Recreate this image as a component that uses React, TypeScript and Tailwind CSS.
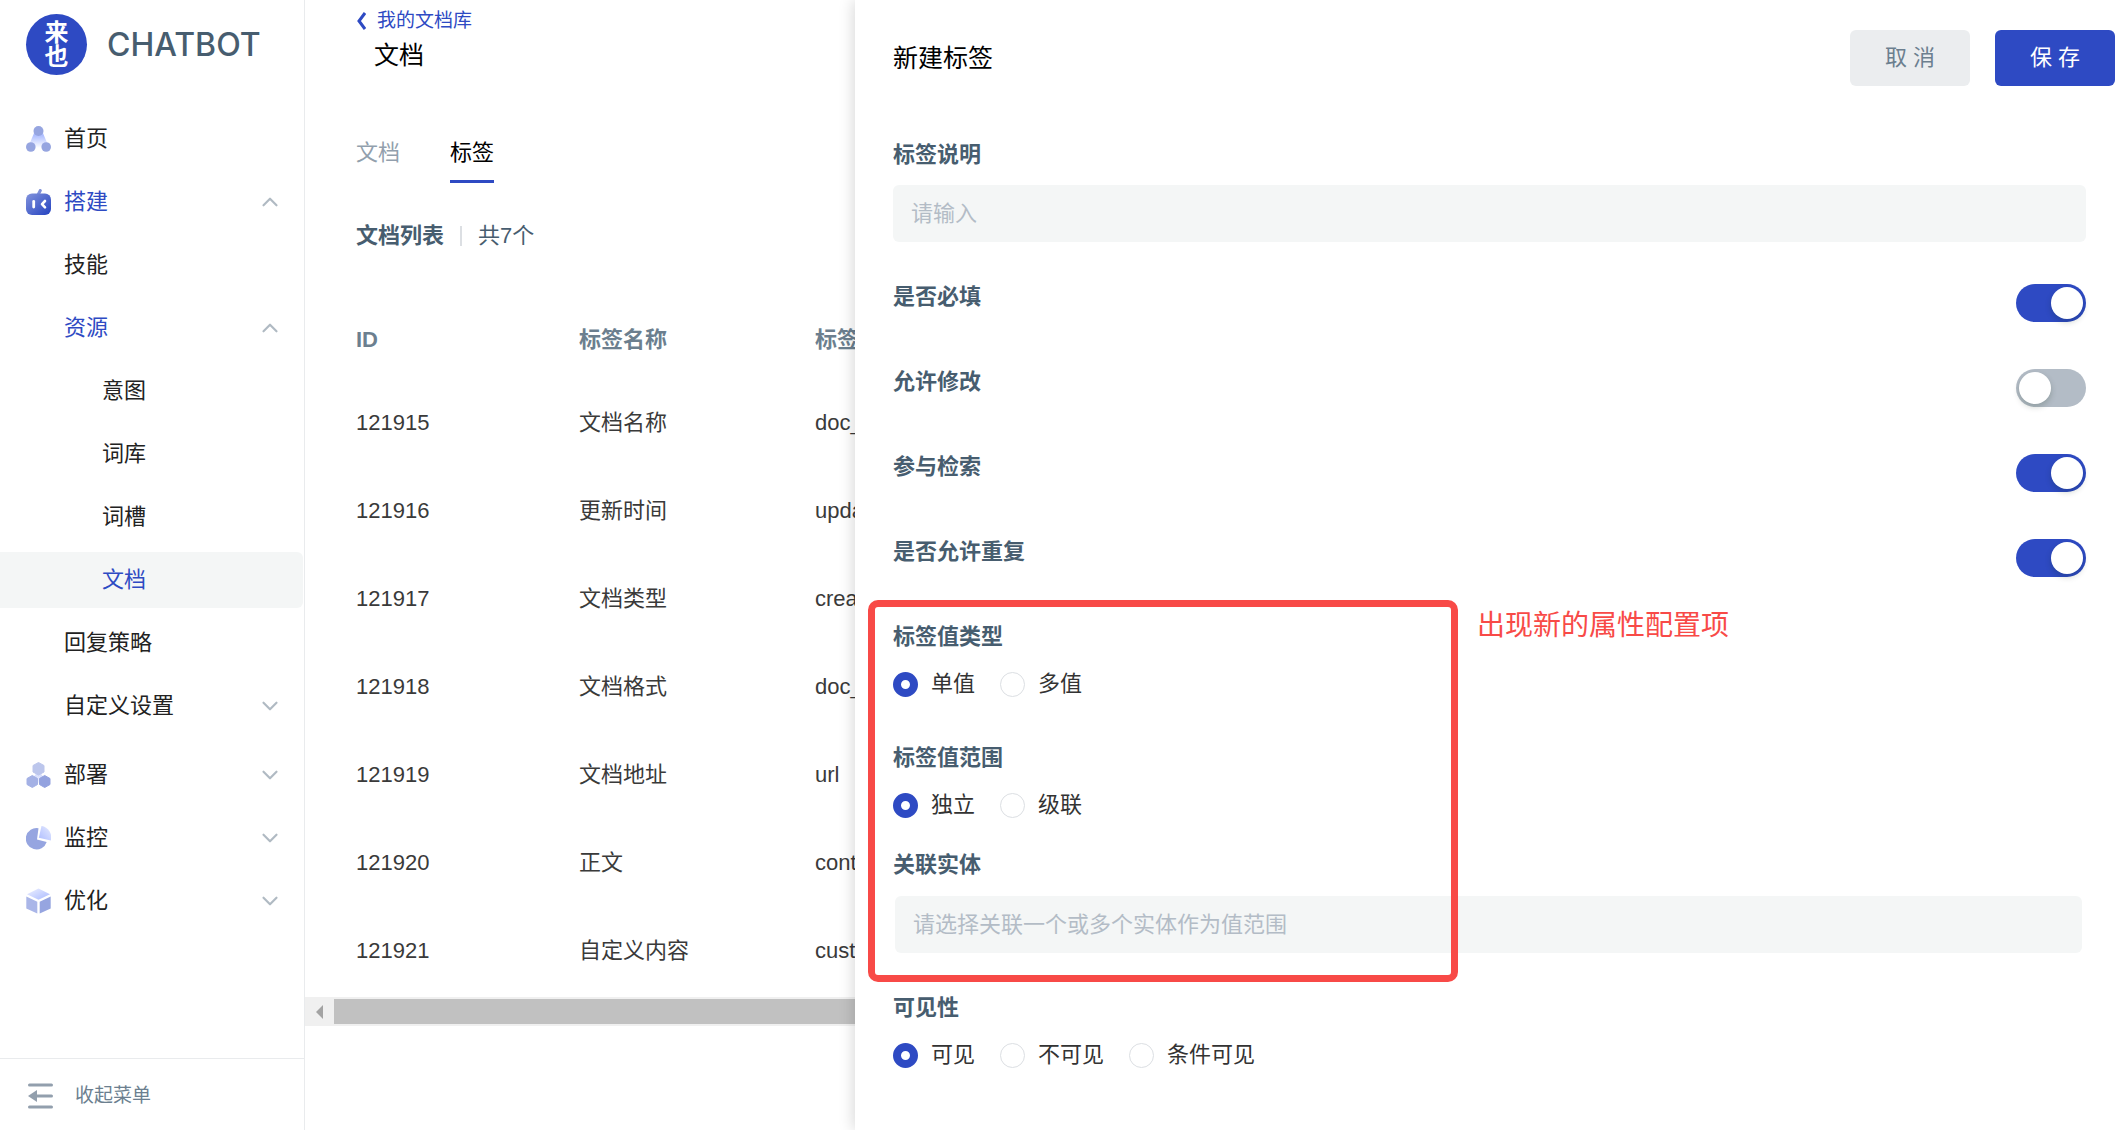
import { useState } from "react";
import type { ReactNode } from "react";
import { ChevronDown, ChevronUp } from "lucide-react";

interface NavItem {
  label: string;
  level: 0 | 1 | 2;
  icon?: ReactNode;
  open?: boolean;
  accent?: boolean;
  active?: boolean;
}

function HomeIcon() {
  return (
    <svg width="25" height="26" viewBox="0 0 25 26">
      <defs>
        <linearGradient id="home-fade" x1="0" y1="0" x2="0" y2="1">
          <stop offset="0.2" stopColor="#adbdff" />
          <stop offset="1" stopColor="#adbdff" stopOpacity="0" />
        </linearGradient>
      </defs>
      <path d="M8.500 6 H16.500 L22 19 Q12.500 25 3 19 Z" fill="url(#home-fade)" />
      <circle cx="12.500" cy="5" r="5" fill="#96a5e0" />
      <circle cx="4.800" cy="21" r="4.800" fill="#96a5e0" />
      <circle cx="20.200" cy="21" r="4.800" fill="#96a5e0" />
    </svg>
  );
}

function BotIcon() {
  return (
    <svg width="25" height="26" viewBox="0 0 25 26">
      <defs>
        <linearGradient id="bot-fill" x1="0" y1="0" x2="1" y2="1">
          <stop offset="0" stopColor="#8293dc" />
          <stop offset="1" stopColor="#2342c0" />
        </linearGradient>
      </defs>
      <path d="M12.500 5 L14.300 1.500" stroke="#7f90d8" strokeWidth="3" strokeLinecap="round" />
      <rect y="4.500" width="25" height="21.500" rx="6" fill="url(#bot-fill)" />
      <path d="M7.700 12.500 V18" stroke="#fff" strokeWidth="2.800" strokeLinecap="round" />
      <path d="M19 12 L16 15.200 L19 18.400" stroke="#fff" strokeWidth="2.600" fill="none" strokeLinecap="round" strokeLinejoin="round" />
    </svg>
  );
}

function DeployIcon() {
  return (
    <svg width="25" height="26" viewBox="0 0 25 26">
      <defs>
        <linearGradient id="deploy-mid" x1="0" y1="0" x2="0" y2="1">
          <stop offset="0" stopColor="#c9d3fb" />
          <stop offset="1" stopColor="#eef1ff" />
        </linearGradient>
      </defs>
      <path d="M12.500 8 L18 16 L12.500 21 L7 16 Z" fill="url(#deploy-mid)" />
      <path d="M12.500 0.500 L18 3.500 V10 L12.500 13 L7 10 V3.500 Z" fill="#bcc6ec" stroke="#bcc6ec" strokeLinejoin="round" />
      <path d="M6.300 13.500 L11.500 16.500 V22.500 L6.300 25.500 L1 22.500 V16.500 Z" fill="#a4b1e5" stroke="#a4b1e5" strokeLinejoin="round" />
      <path d="M18.700 13.500 L24 16.500 V22.500 L18.700 25.500 L13.500 22.500 V16.500 Z" fill="#93a2df" stroke="#93a2df" strokeLinejoin="round" />
    </svg>
  );
}

function MonitorIcon() {
  return (
    <svg width="25" height="26" viewBox="0 0 25 26">
      <defs>
        <linearGradient id="pie-slice" x1="0" y1="1" x2="1" y2="0">
          <stop offset="0" stopColor="#aebdff" />
          <stop offset="1" stopColor="#e6ebff" />
        </linearGradient>
      </defs>
      <path d="M12.500 3.200 A10.700 10.700 0 1 0 20.700 17 L11 14.500 Z" fill="#96a5e0" />
      <path d="M15.500 1 A11.500 11.500 0 0 1 24.800 15.500 L12.800 12.800 Z" fill="url(#pie-slice)" />
    </svg>
  );
}

function OptimizeIcon() {
  return (
    <svg width="25" height="26" viewBox="0 0 25 26">
      <defs>
        <linearGradient id="cube-top" x1="0" y1="0" x2="1" y2="1">
          <stop offset="0" stopColor="#eef1ff" />
          <stop offset="1" stopColor="#a9b9ff" />
        </linearGradient>
      </defs>
      <path d="M12.500 0.500 L24 6.200 L12.500 11.800 L1 6.200 Z" fill="url(#cube-top)" />
      <path d="M0.300 8.500 L11.300 13.700 V25.500 L0.300 20.500 Z" fill="#aab6e8" />
      <path d="M24.700 8.500 L13.700 13.700 V25.500 L24.700 20.500 Z" fill="#96a5e0" />
    </svg>
  );
}

function CollapseIcon() {
  return (
    <svg width="25" height="26" viewBox="0 0 25 26" stroke="#929fad" strokeWidth="3" strokeLinecap="round">
      <path d="M1.500 2 H23.500 M9 13 H23.500 M1.500 24 H23.500" />
      <path d="M0 13 L9 7 V19 Z" fill="#929fad" stroke="none" />
    </svg>
  );
}

const NAV: NavItem[] = [
  { label: "首页", level: 0, icon: <HomeIcon /> },
  { label: "搭建", level: 0, icon: <BotIcon />, open: true, accent: true },
  { label: "技能", level: 1 },
  { label: "资源", level: 1, open: true, accent: true },
  { label: "意图", level: 2 },
  { label: "词库", level: 2 },
  { label: "词槽", level: 2 },
  { label: "文档", level: 2, accent: true, active: true },
  { label: "回复策略", level: 1 },
  { label: "自定义设置", level: 1, open: false },
];

const NAV_BOTTOM: NavItem[] = [
  { label: "部署", level: 0, icon: <DeployIcon />, open: false },
  { label: "监控", level: 0, icon: <MonitorIcon />, open: false },
  { label: "优化", level: 0, icon: <OptimizeIcon />, open: false },
];

const ROWS = [
  { id: "121915", name: "文档名称", key: "doc_" },
  { id: "121916", name: "更新时间", key: "upda" },
  { id: "121917", name: "文档类型", key: "crea" },
  { id: "121918", name: "文档格式", key: "doc_" },
  { id: "121919", name: "文档地址", key: "url" },
  { id: "121920", name: "正文", key: "cont" },
  { id: "121921", name: "自定义内容", key: "cust" },
];

const INDENT = { 0: "pl-[26px]", 1: "pl-16", 2: "pl-[102px]" };

function NavRow({ item }: { item: NavItem }) {
  return (
    <li>
      <button
        className={`flex h-14 w-[303px] items-center rounded-r-md pr-5 text-left ${INDENT[item.level]} ${
          item.active ? "bg-[#f4f6f6]" : ""
        } ${item.accent ? "text-[#2e4ac3]" : "text-[#222]"}`}
      >
        {item.icon && <span className="mr-[13px] shrink-0">{item.icon}</span>}
        <span className="flex-1">{item.label}</span>
        {item.open === true && <ChevronUp size={26} strokeWidth={2} className="text-[#b0bac3]" />}
        {item.open === false && <ChevronDown size={26} strokeWidth={2} className="text-[#b0bac3]" />}
      </button>
    </li>
  );
}

function Sidebar() {
  return (
    <aside className="flex w-[305px] shrink-0 flex-col border-r border-[#e9ebed]">
      <div className="flex items-center gap-5 pl-[26px] pt-[14px]">
        <div className="flex size-[61px] flex-col items-center justify-center rounded-full bg-[#2e4ac3] text-[24px] font-bold leading-6 text-white">
          <span>来</span>
          <span>也</span>
        </div>
        <span className="font-['Inter',sans-serif] text-[32px] font-medium leading-8 text-[#475d6f]">CHATBOT</span>
      </div>
      <nav className="mt-9 flex-1">
        <ul className="flex flex-col gap-[7px]">
          {NAV.map((item) => <NavRow key={item.label} item={item} />)}
        </ul>
        <ul className="mt-[13px] flex flex-col gap-[7px]">
          {NAV_BOTTOM.map((item) => <NavRow key={item.label} item={item} />)}
        </ul>
      </nav>
      <button className="flex h-18 items-center gap-[22px] border-t border-[#e9ebed] pl-7 pt-[2px] text-[19px] text-[#6c7f8f]">
        <CollapseIcon />
        收起菜单
      </button>
    </aside>
  );
}

function DocumentPage() {
  return (
    <main className="min-w-0 flex-1 pt-[9px]">
      <div className="pl-[51px]">
        <a href="#" className="flex items-center gap-[11px] text-[19px] leading-6 text-[#2e4ac3]">
          <svg width="10" height="18" viewBox="0 0 10 18" fill="none" stroke="currentColor" strokeWidth="3">
            <path d="M9 1 L3 9 L9 17" />
          </svg>
          我的文档库
        </a>
        <h1 className="mt-[6px] pl-[18px] text-[25px] leading-8 text-black">文档</h1>

        <div role="tablist" className="mt-[66px] flex gap-[50px] leading-8">
          <button role="tab" aria-selected="false" className="border-b-3 border-transparent pb-[11px] text-[#929fad]">文档</button>
          <button role="tab" aria-selected="true" className="border-b-3 border-[#2e4ac3] pb-[11px] text-black">标签</button>
        </div>

        <div className="mt-[37px] flex items-center leading-8 text-[#475d6f]">
          <h2 className="font-bold">文档列表</h2>
          <span className="mx-4 h-5 w-[2px] bg-[#dcdfe3]" />
          <span>共7个</span>
        </div>
      </div>

      <div className="mt-[49px] overflow-hidden pl-[51px]">
        <table className="w-full table-fixed text-left">
          <thead>
            <tr className="h-[78px] text-[#6c7f8f]">
              <th className="w-[223px] font-bold">ID</th>
              <th className="w-[236px] font-bold">标签名称</th>
              <th className="font-bold">标签</th>
            </tr>
          </thead>
          <tbody>
            {ROWS.map((row) => (
              <tr key={row.id} className="h-[88px] text-[#3a3a3a]">
                <td>{row.id}</td>
                <td>{row.name}</td>
                <td>{row.key}</td>
              </tr>
            ))}
          </tbody>
        </table>
      </div>

      {/* Horizontal scrollbar */}
      <div className="mt-[2px] flex h-[29px] items-center bg-[#f0f0f0] pl-[11px]">
        <svg width="7" height="14" viewBox="0 0 7 14" fill="#a3a3a3"><path d="M7 0 V14 L0 7 Z" /></svg>
        <div className="ml-[11px] h-[25px] flex-1 bg-[#c1c1c1]" />
      </div>
    </main>
  );
}

function SwitchRow({ id, label, defaultOn }: { id: string; label: string; defaultOn: boolean }) {
  const [on, setOn] = useState(defaultOn);
  return (
    <div className="flex h-[41px] items-end justify-between">
      <label htmlFor={id} className="self-start font-bold text-[#475d6f]">{label}</label>
      <input
        id={id}
        type="checkbox"
        role="switch"
        checked={on}
        onChange={(e) => setOn(e.target.checked)}
        className="flex h-[38px] w-[70px] appearance-none items-center rounded-full bg-[#b3bcc6] px-[3px] before:size-8 before:rounded-full before:bg-white before:shadow-[0_3px_6px_rgba(0,35,11,0.2)] checked:justify-end checked:bg-[#2e4ac3]"
      />
    </div>
  );
}

function RadioGroup({ name, label, options, className = "" }: {
  name: string;
  label: string;
  options: string[];
  className?: string;
}) {
  const [value, setValue] = useState(options[0]);
  return (
    <fieldset className={className}>
      <legend className="font-bold text-[#475d6f]">{label}</legend>
      <div className="mt-[15px] flex gap-[25px]">
        {options.map((opt) => (
          <label key={opt} className="flex items-center gap-[13px] text-[#333]">
            <input
              type="radio"
              name={name}
              checked={value === opt}
              onChange={() => setValue(opt)}
              className="size-[25px] appearance-none rounded-full border border-[#dcdfe3] bg-white checked:border-8 checked:border-[#2e4ac3]"
            />
            {opt}
          </label>
        ))}
      </div>
    </fieldset>
  );
}

function NewTagDrawer() {
  return (
    <section className="absolute inset-y-0 left-[855px] right-0 bg-white pl-[38px] pt-[30px] shadow-[-2px_0_14px_rgba(0,0,0,0.15)]">
      <header className="flex items-center justify-between pr-[5px]">
        <h2 className="text-[25px] text-black">新建标签</h2>
        <div className="flex gap-[25px]">
          <button className="h-14 w-[120px] rounded-md bg-[#ebedef] text-[#6c7f8f]">取 消</button>
          <button className="h-14 w-[120px] rounded-md bg-[#2e4ac3] text-white">保 存</button>
        </div>
      </header>

      <form className="mt-[53px] pr-[34px] leading-8">
        <label htmlFor="tag-desc" className="block font-bold text-[#475d6f]">标签说明</label>
        <input
          id="tag-desc"
          type="text"
          placeholder="请输入"
          className="mt-[14px] h-[57px] w-full rounded-md bg-[#f4f6f6] px-[18px] placeholder:text-[#b3bcc6]"
        />

        <div className="mt-[39px] flex flex-col gap-11">
          <SwitchRow id="required" label="是否必填" defaultOn={true} />
          <SwitchRow id="editable" label="允许修改" defaultOn={false} />
          <SwitchRow id="searchable" label="参与检索" defaultOn={true} />
          <SwitchRow id="repeatable" label="是否允许重复" defaultOn={true} />
        </div>

        <div className="relative mt-11">
          <RadioGroup name="value-type" label="标签值类型" options={["单值", "多值"]} />
          <RadioGroup name="value-range" label="标签值范围" options={["独立", "级联"]} className="mt-[42px]" />
          <label htmlFor="entity" className="mt-7 block font-bold text-[#475d6f]">关联实体</label>
          <div className="mt-[15px] pl-[2px] pr-1">
            <select
              id="entity"
              defaultValue=""
              className="block h-[57px] w-full appearance-none rounded-md bg-[#f4f6f6] px-[18px] text-[#b3bcc6]"
            >
              <option value="">请选择关联一个或多个实体作为值范围</option>
            </select>
          </div>

          {/* Callout over the new options */}
          <div className="pointer-events-none absolute -bottom-[29px] -left-[25px] -top-[21px] w-[590px] rounded-[10px] border-7 border-[#f84a47]" />
          <p className="pointer-events-none absolute -top-[11px] left-[584px] text-[28px] text-[#f84a47]">
            出现新的属性配置项
          </p>
        </div>

        <RadioGroup name="visibility" label="可见性" options={["可见", "不可见", "条件可见"]} className="mt-[39px]" />
      </form>
    </section>
  );
}

export default function App() {
  return (
    <div className="relative flex min-h-screen overflow-hidden bg-white font-['Liberation_Sans','Noto_Sans_CJK_SC',sans-serif] text-[22px] leading-8">
      <Sidebar />
      <DocumentPage />
      <NewTagDrawer />
    </div>
  );
}
